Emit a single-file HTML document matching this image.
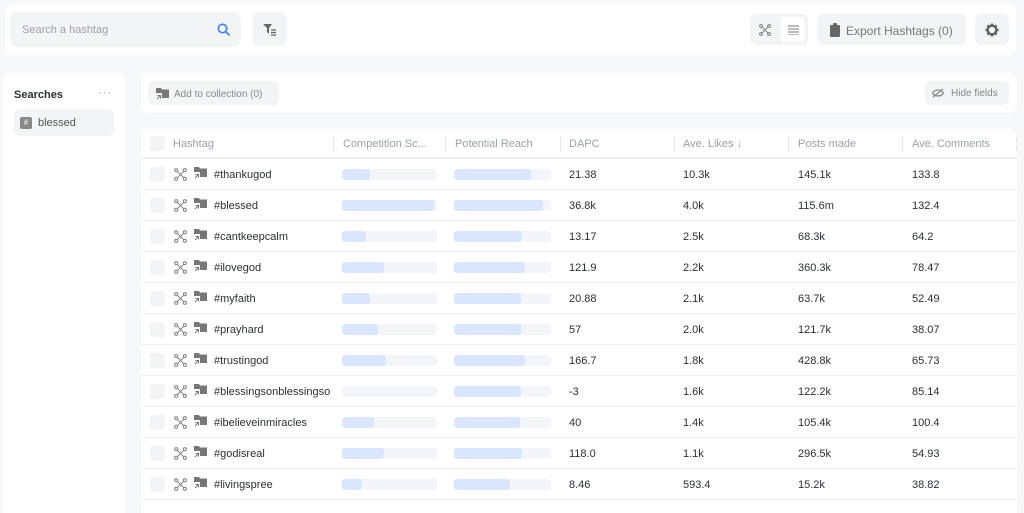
<!DOCTYPE html><html><head><meta charset="utf-8"><style>
*{box-sizing:border-box;margin:0;padding:0}
html,body{width:1024px;height:513px;overflow:hidden}
body{background:#f7f8fa;font-family:"Liberation Sans",sans-serif;position:relative;color:#333}
.card{position:absolute;background:#fff;border-radius:8px}
.a{position:absolute}
.btn{position:absolute;background:#f3f4f6;border-radius:6px}
.hd{position:absolute;top:138px;font-size:11px;color:#9aa0aa}
.sep{position:absolute;top:137px;width:1px;height:14px;background:#e3e5e8}
.row{position:absolute;left:141px;width:876px;height:31px;border-bottom:1px solid #eeeff2}
.row .c{position:absolute;top:10px;font-size:11px;color:#2b2f36}
.cb{position:absolute;left:9px;top:8px;width:15px;height:15px;border-radius:3px;background:#f3f4f6}
.tr{position:absolute;top:10px;height:11px;border-radius:3px;background:#f3f5f8;overflow:hidden}
.tr i{display:block;height:100%;background:#d9e6fd;border-radius:3px}
</style></head><body>
<div class="card" style="left:5px;top:4px;width:1011px;height:51px"></div>
<div class="btn" style="left:10px;top:12px;width:231px;height:35px;border-radius:8px"></div>
<div class="a" style="left:22px;top:24px;font-size:11px;color:#9aa0aa">Search a hashtag</div>
<svg class="a" style="left:217px;top:23px" width="14" height="14" viewBox="0 0 14 14"><circle cx="5.5" cy="5.5" r="4.2" fill="none" stroke="#3b82f6" stroke-width="1.6"/><path d="M8.5 8.5L12.5 12.5" stroke="#3b82f6" stroke-width="1.8"/></svg>
<div class="btn" style="left:253px;top:12px;width:34px;height:34px"></div>
<svg class="a" style="left:263px;top:24px" width="14" height="12" viewBox="0 0 14 12"><path d="M0 0h9L6 4v6L4 8V4z" fill="#666"/><path d="M8 6h5M8 8.5h5M8 11h5" stroke="#666" stroke-width="1.2"/></svg>
<div class="btn" style="left:750px;top:14px;width:58px;height:31px"></div>
<div class="a" style="left:781px;top:17px;width:24px;height:25px;background:#fff;border-radius:4px"></div>
<svg class="a" style="left:759px;top:24px" width="12" height="12" viewBox="0 0 12 12" fill="none" stroke="#888" stroke-width="1.1"><circle cx="2" cy="2" r="1.4"/><circle cx="10" cy="2" r="1.4"/><circle cx="2" cy="10" r="1.4"/><circle cx="10" cy="10" r="1.4"/><path d="M3 3l6 6M9 3l-6 6"/></svg>
<svg class="a" style="left:788px;top:25px" width="11" height="10" viewBox="0 0 11 10" stroke="#777" stroke-width="1.1"><path d="M0 1h11M0 4h11M0 7h11M0 10h11"/></svg>
<div class="btn" style="left:817px;top:14px;width:149px;height:31px"></div>
<svg class="a" style="left:830px;top:23px" width="10" height="14" viewBox="0 0 10 14"><rect x="0" y="2" width="10" height="12" rx="1" fill="#666"/><rect x="3" y="0" width="4" height="3" rx="1" fill="#666"/></svg>
<div class="a" style="left:846px;top:24px;font-size:12px;color:#777">Export Hashtags (0)</div>
<div class="btn" style="left:975px;top:14px;width:34px;height:31px"></div>
<svg class="a" style="left:985px;top:23px" width="14" height="14" viewBox="0 0 14 14"><circle cx="7" cy="7" r="4.3" fill="none" stroke="#666" stroke-width="2.4"/><g stroke="#666" stroke-width="2.4"><path d="M7 0.5v3M7 10.5v3M0.5 7h3M10.5 7h3M2.4 2.4l2 2M9.6 9.6l2 2M11.6 2.4l-2 2M4.4 9.6l-2 2"/></g><circle cx="7" cy="7" r="1.6" fill="#f3f4f6"/></svg>
<div class="card" style="left:3px;top:73px;width:122px;height:440px;border-radius:8px 8px 0 0"></div>
<div class="a" style="left:14px;top:89px;font-size:11px;font-weight:bold;color:#2b2f36">Searches</div>
<div class="a" style="left:98px;top:87px;font-size:11px;color:#999;letter-spacing:1px">···</div>
<div class="btn" style="left:14px;top:109px;width:100px;height:27px"></div>
<div class="a" style="left:20px;top:117px;width:12px;height:12px;background:#888;border-radius:2px;color:#fff;font-size:8px;text-align:center;line-height:12px">#</div>
<div class="a" style="left:38px;top:117px;font-size:11px;color:#555">blessed</div>
<div class="card" style="left:141px;top:73px;width:876px;height:40px"></div>
<div class="btn" style="left:148px;top:81px;width:131px;height:24px"></div>
<svg class="a" style="left:156px;top:88px" width="13" height="12" viewBox="0 0 13 12"><path d="M0 0h5l1 1.5h7V10H6V5H0z" fill="#777"/><path d="M1 11l3.5-3.5M1.5 7.5h3v3" stroke="#777" fill="none" stroke-width="1"/></svg>
<div class="a" style="left:174px;top:89px;font-size:10px;color:#888">Add to collection (0)</div>
<div class="btn" style="left:925px;top:81px;width:84px;height:24px"></div>
<svg class="a" style="left:932px;top:88px" width="12" height="10" viewBox="0 0 12 10" fill="none" stroke="#888" stroke-width="1.2"><path d="M0.5 5C3 1 9 1 11.5 5 9 9 3 9 .5 5z"/><path d="M1 9L11 1"/></svg>
<div class="a" style="left:951px;top:88px;font-size:10px;color:#888">Hide fields</div>
<div class="card" style="left:141px;top:129px;width:876px;height:384px;border-radius:8px 8px 0 0"></div>
<div class="a" style="left:141px;top:157px;width:876px;height:2px;background:#eceef1"></div>
<div class="a" style="left:150px;top:136px;width:15px;height:15px;background:#f3f4f6;border-radius:3px"></div>
<div class="hd" style="left:173px">Hashtag</div>
<div class="sep" style="left:333px"></div><div class="hd" style="left:343px">Competition Sc...</div>
<div class="sep" style="left:445px"></div><div class="hd" style="left:455px">Potential Reach</div>
<div class="sep" style="left:560px"></div><div class="hd" style="left:569px">DAPC</div>
<div class="sep" style="left:674px"></div><div class="hd" style="left:683px">Ave. Likes &#8595;</div>
<div class="sep" style="left:788px"></div><div class="hd" style="left:798px">Posts made</div>
<div class="sep" style="left:902px"></div><div class="hd" style="left:912px">Ave. Comments</div>
<div class="sep" style="left:1016px"></div>
<div id="rows"></div>
<script>
var d=[["#thankugod",28,77,"21.38","10.3k","145.1k","133.8"],["#blessed",92,89,"36.8k","4.0k","115.6m","132.4"],["#cantkeepcalm",24,68,"13.17","2.5k","68.3k","64.2"],["#ilovegod",42,71,"121.9","2.2k","360.3k","78.47"],["#myfaith",28,67,"20.88","2.1k","63.7k","52.49"],["#prayhard",36,67,"57","2.0k","121.7k","38.07"],["#trustingod",44,71,"166.7","1.8k","428.8k","65.73"],["#blessingsonblessingso",0,67,"-3","1.6k","122.2k","85.14"],["#ibelieveinmiracles",32,66,"40","1.4k","105.4k","100.4"],["#godisreal",42,68,"118.0","1.1k","296.5k","54.93"],["#livingspree",20,56,"8.46","593.4","15.2k","38.82"]];
var h="";
d.forEach(function(r,i){var t=159+i*31;
h+='<div class="row" style="top:'+t+'px"><div class="cb"></div>'+
'<svg class="a" style="left:33px;top:9px" width="13" height="13" viewBox="0 0 12 12" fill="none" stroke="#888" stroke-width="1"><circle cx="2" cy="2" r="1.4"/><circle cx="10" cy="2" r="1.4"/><circle cx="2" cy="10" r="1.4"/><circle cx="10" cy="10" r="1.4"/><path d="M3 3l6 6M9 3l-6 6"/></svg>'+
'<svg class="a" style="left:53px;top:8px" width="13" height="12" viewBox="0 0 13 12"><path d="M0 0h5l1 1.5h7V10H6V5H0z" fill="#777"/><path d="M1 11l3.5-3.5M1.5 7.5h3v3" stroke="#777" fill="none" stroke-width="1"/></svg>'+
'<div class="c" style="left:73px">'+r[0]+'</div>'+
'<div class="tr" style="left:201px;width:95px"><i style="width:'+r[1]+'px"></i></div>'+
'<div class="tr" style="left:313px;width:97px"><i style="width:'+r[2]+'px"></i></div>'+
'<div class="c" style="left:428px">'+r[3]+'</div><div class="c" style="left:542px">'+r[4]+'</div><div class="c" style="left:657px">'+r[5]+'</div><div class="c" style="left:771px">'+r[6]+'</div></div>';});
document.getElementById("rows").innerHTML=h;
</script>
</body></html>
